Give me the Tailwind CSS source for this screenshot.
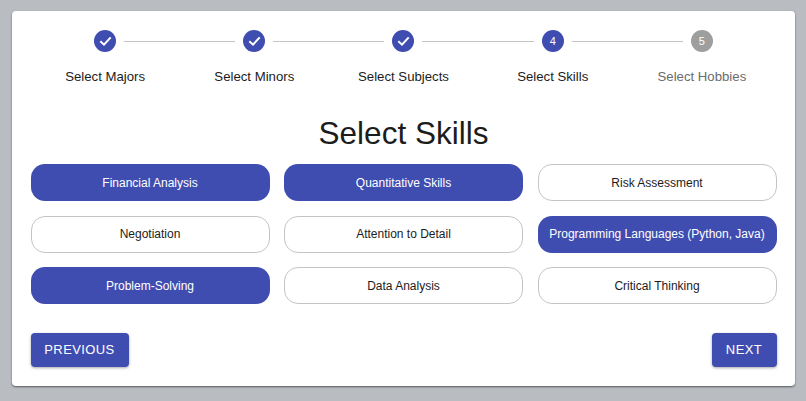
<!DOCTYPE html>
<html lang="en">
<head>
  <meta charset="UTF-8" />
  <meta name="viewport" content="width=device-width, initial-scale=1" />
  <title>Select Skills</title>
  <script src="https://cdn.jsdelivr.net/npm/@tailwindcss/browser@4"></script>
</head>
<body class="h-[401px] overflow-hidden bg-[#b9bdc2] font-['Liberation_Sans',Arial,sans-serif]">
  <div class="mx-[12px] mt-[11px] h-[375px] w-[783px] rounded-[4px] bg-white px-[18.5px] pt-[19px] shadow-[0_1px_2px_rgba(0,0,0,0.55)]">

    <!-- stepper -->
    <div class="grid grid-cols-5">
      <div class="relative flex flex-col items-center">
        <div class="flex h-[22px] w-[22px] items-center justify-center rounded-full bg-[#3f4db0]">
          <svg class="h-[14px] w-[14px]" viewBox="0 0 14 14" fill="none" stroke="white" stroke-width="2"><path d="M2.3 7.3l3.7 3.4 6.7-7.4" /></svg>
        </div>
        <div class="absolute left-[calc(50%+19px)] right-[calc(-50%+19px)] top-[11px] h-px bg-[#c4c4c4]"></div>
        <span class="mt-[17px] text-[13.2px] leading-[16px] text-[#1c1c1c]">Select Majors</span>
      </div>
      <div class="relative flex flex-col items-center">
        <div class="flex h-[22px] w-[22px] items-center justify-center rounded-full bg-[#3f4db0]">
          <svg class="h-[14px] w-[14px]" viewBox="0 0 14 14" fill="none" stroke="white" stroke-width="2"><path d="M2.3 7.3l3.7 3.4 6.7-7.4" /></svg>
        </div>
        <div class="absolute left-[calc(50%+19px)] right-[calc(-50%+19px)] top-[11px] h-px bg-[#c4c4c4]"></div>
        <span class="mt-[17px] text-[13.2px] leading-[16px] text-[#1c1c1c]">Select Minors</span>
      </div>
      <div class="relative flex flex-col items-center">
        <div class="flex h-[22px] w-[22px] items-center justify-center rounded-full bg-[#3f4db0]">
          <svg class="h-[14px] w-[14px]" viewBox="0 0 14 14" fill="none" stroke="white" stroke-width="2"><path d="M2.3 7.3l3.7 3.4 6.7-7.4" /></svg>
        </div>
        <div class="absolute left-[calc(50%+19px)] right-[calc(-50%+19px)] top-[11px] h-px bg-[#c4c4c4]"></div>
        <span class="mt-[17px] text-[13.2px] leading-[16px] text-[#1c1c1c]">Select Subjects</span>
      </div>
      <div class="relative flex flex-col items-center">
        <div class="flex h-[22px] w-[22px] items-center justify-center rounded-full bg-[#3f4db0] text-[11px] text-white">4</div>
        <div class="absolute left-[calc(50%+19px)] right-[calc(-50%+19px)] top-[11px] h-px bg-[#c4c4c4]"></div>
        <span class="mt-[17px] text-[13.2px] leading-[16px] text-[#1c1c1c]">Select Skills</span>
      </div>
      <div class="relative flex flex-col items-center">
        <div class="flex h-[22px] w-[22px] items-center justify-center rounded-full bg-[#9e9e9e] text-[11px] text-white">5</div>
        <span class="mt-[17px] text-[13.2px] leading-[16px] text-[#6b6b6b]">Select Hobbies</span>
      </div>
    </div>

    <h1 class="mt-[28px] text-center text-[31.5px] leading-[40px] text-[#1c1c1c]">Select Skills</h1>

    <!-- skills -->
    <div class="mt-[11px] grid grid-cols-3 gap-x-[14.5px] gap-y-[14.5px] text-[12px]">
      <div class="flex h-[37px] items-center justify-center rounded-[14px] bg-[#3f4db0] text-white">Financial Analysis</div>
      <div class="flex h-[37px] items-center justify-center rounded-[14px] bg-[#3f4db0] text-white">Quantitative Skills</div>
      <div class="flex h-[37px] items-center justify-center rounded-[14px] border border-[#c4c4c4] text-[#1c1c1c]">Risk Assessment</div>
      <div class="flex h-[37px] items-center justify-center rounded-[14px] border border-[#c4c4c4] text-[#1c1c1c]">Negotiation</div>
      <div class="flex h-[37px] items-center justify-center rounded-[14px] border border-[#c4c4c4] text-[#1c1c1c]">Attention to Detail</div>
      <div class="flex h-[37px] items-center justify-center rounded-[14px] bg-[#3f4db0] text-white">Programming Languages (Python, Java)</div>
      <div class="flex h-[37px] items-center justify-center rounded-[14px] bg-[#3f4db0] text-white">Problem-Solving</div>
      <div class="flex h-[37px] items-center justify-center rounded-[14px] border border-[#c4c4c4] text-[#1c1c1c]">Data Analysis</div>
      <div class="flex h-[37px] items-center justify-center rounded-[14px] border border-[#c4c4c4] text-[#1c1c1c]">Critical Thinking</div>
    </div>

    <div class="mt-[29px] flex justify-between">
      <button class="h-[34px] w-[98px] rounded-[4px] bg-[#3f4db0] text-[13px] tracking-[0.4px] text-white shadow-[0_1px_3px_rgba(0,0,0,0.35)]">PREVIOUS</button>
      <button class="h-[34px] w-[65px] rounded-[4px] bg-[#3f4db0] text-[13px] tracking-[0.4px] text-white shadow-[0_1px_3px_rgba(0,0,0,0.35)]">NEXT</button>
    </div>
  </div>
</body>
</html>
